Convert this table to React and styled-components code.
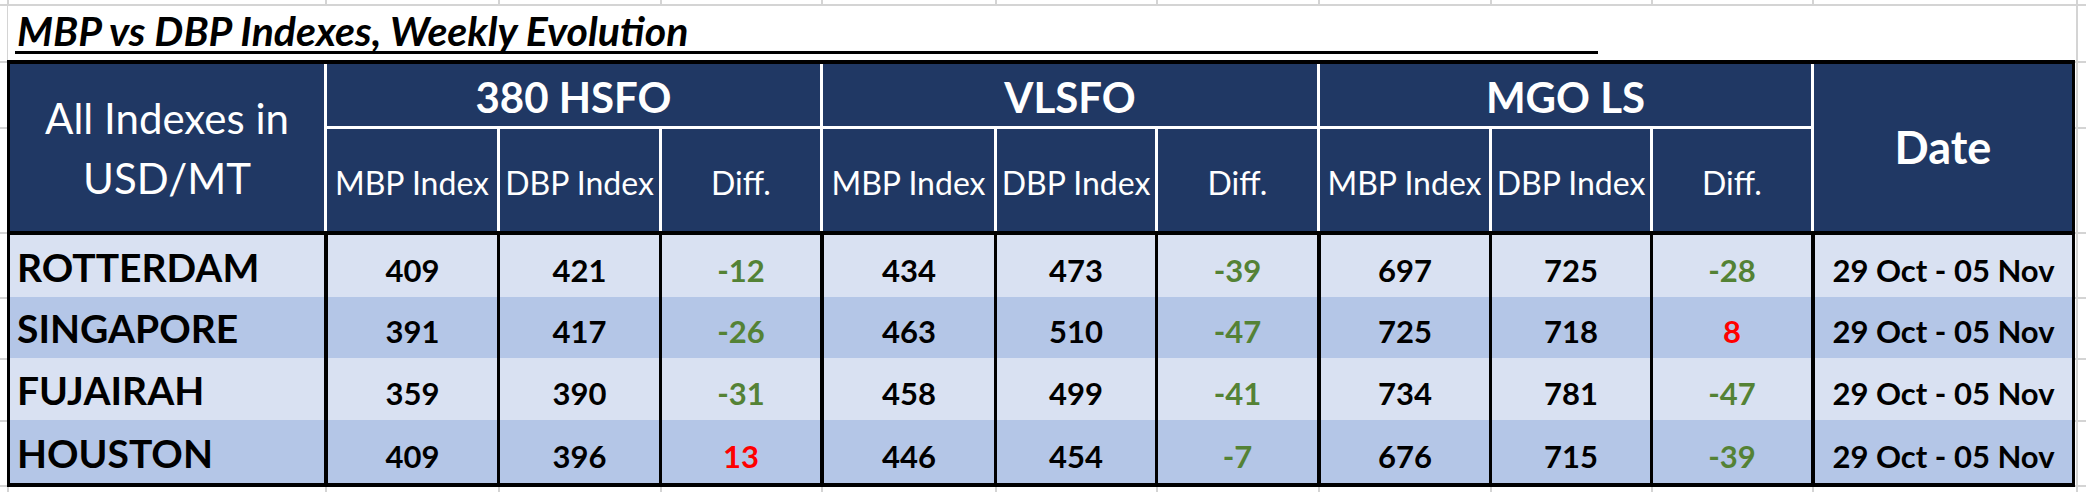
import React from 'react';
import styled, { createGlobalStyle } from 'styled-components';

const GlobalStyle = createGlobalStyle`
  html, body {
    margin: 0;
    padding: 0;
    background: #ffffff;
  }
  body {
    font-family: Lato, 'Liberation Sans', sans-serif;
  }
`;

// spreadsheet gridlines that show around the table
const GRID = '#d4d4d4';
const gridX = [7, 325, 498, 660, 821, 995, 1156, 1318, 1490, 1651, 1812, 2076];
const gridY = [4, 61, 127, 232, 297, 358, 420, 485];
const gridBackground = [
  ...gridX.map(x => `linear-gradient(90deg, transparent ${x}px, ${GRID} ${x}px, ${GRID} ${x + 2}px, transparent ${x + 2}px)`),
  ...gridY.map(y => `linear-gradient(180deg, transparent ${y}px, ${GRID} ${y}px, ${GRID} ${y + 2}px, transparent ${y + 2}px)`),
].join(', ');

const COLUMNS = '314px 173px 162px 161px 174px 161px 162px 172px 161px 161px 261px';

const NAVY = '#203864';
const LIGHT = '#d9e1f2';
const MID = '#b4c6e7';
const GREEN = '#548235';
const RED = '#ff0000';

const Sheet = styled.div`
  width: 2086px;
  height: 492px;
  box-sizing: border-box;
  padding: 6px 0 0 7px;
  display: flex;
  flex-direction: column;
  background-color: #ffffff;
  background-image: ${gridBackground};
  overflow: hidden;
`;

const TitleRow = styled.div`
  margin-left: 1px;
  width: 2068px;
  height: 54px;
  box-sizing: border-box;
  padding-left: 7px;
  background: #ffffff;
  display: flex;
`;

const TitleCell = styled.div`
  width: 1583px;
  height: 48px;
  box-sizing: border-box;
  border-bottom: 3px solid #000;
  display: flex;
  align-items: flex-end;
  padding-left: 2px;
`;

const Title = styled.h1`
  margin: 0;
  font-size: 41px;
  line-height: 1;
  font-weight: 700;
  font-style: italic;
  color: #000;
`;

const TableFrame = styled.div`
  width: 2068px;
  box-sizing: border-box;
  border: 3px solid #000;
  border-top-width: 4px;
  border-bottom-width: 4px;
  display: flex;
  flex-direction: column;
`;

const HeaderGrid = styled.div`
  display: grid;
  grid-template-columns: ${COLUMNS};
  grid-template-rows: 62px 105px;
  background: ${NAVY};
  color: #ffffff;
`;

const HeadCell = styled.div`
  box-sizing: border-box;
  display: flex;
  align-items: center;
  justify-content: center;
  text-align: center;
  line-height: 1;
  white-space: nowrap;
  border-left: ${p => (p.$first ? 'none' : '3px solid #ffffff')};
  border-top: ${p => (p.$sub ? '3px solid #ffffff' : 'none')};
`;

const CornerCell = styled(HeadCell)`
  grid-row: 1 / 3;
  font-size: 42px;
  line-height: 60px;
  font-weight: 400;
`;

const GroupCell = styled(HeadCell)`
  grid-column: span 3;
  font-size: 42px;
  font-weight: 700;
  padding-top: 4px;
`;

const DateHead = styled(HeadCell)`
  grid-column: 11;
  grid-row: 1 / 3;
  font-size: 45px;
  font-weight: 700;
`;

const SubCell = styled(HeadCell)`
  grid-row: 2;
  font-size: 32px;
  font-weight: 400;
  padding-top: 6px;
`;

const BodyGrid = styled.div`
  display: grid;
  grid-template-columns: ${COLUMNS};
  grid-template-rows: 62px 61px 62px 63px;
  border-top: 4px solid #000;
`;

const BodyCell = styled.div`
  box-sizing: border-box;
  display: flex;
  align-items: flex-end;
  justify-content: center;
  line-height: 1;
  white-space: nowrap;
  font-weight: 700;
  font-size: 31px;
  padding-bottom: 11px;
  color: ${p => p.$color || '#000'};
  background: ${p => (p.$shade ? MID : LIGHT)};
  border-left: ${p => (p.$sep ? `${p.$sep}px solid #000` : 'none')};
`;

const PortCell = styled(BodyCell)`
  justify-content: flex-start;
  padding-left: 7px;
  padding-bottom: 10px;
  font-size: 39px;
`;

const groups = ['380 HSFO', 'VLSFO', 'MGO LS'];
const subs = ['MBP Index', 'DBP Index', 'Diff.'];

const rows = [
  { port: 'ROTTERDAM', values: [409, 421, -12, 434, 473, -39, 697, 725, -28] },
  { port: 'SINGAPORE', values: [391, 417, -26, 463, 510, -47, 725, 718, 8] },
  { port: 'FUJAIRAH', values: [359, 390, -31, 458, 499, -41, 734, 781, -47] },
  { port: 'HOUSTON', values: [409, 396, 13, 446, 454, -7, 676, 715, -39] },
];

const PERIOD = '29 Oct - 05 Nov';

const diffColor = v => (v < 0 ? GREEN : RED);

const App = () => {
  return (
    <>
      <GlobalStyle />
      <Sheet>
        <TitleRow>
          <TitleCell>
            <Title>MBP vs DBP Indexes, Weekly Evolution</Title>
          </TitleCell>
        </TitleRow>
        <TableFrame>
          <HeaderGrid>
            <CornerCell $first>
              All Indexes in
              <br />
              USD/MT
            </CornerCell>
            {groups.map(g => (
              <GroupCell key={g}>{g}</GroupCell>
            ))}
            <DateHead>Date</DateHead>
            {groups.map(g =>
              subs.map(s => (
                <SubCell key={g + s} $sub>
                  {s}
                </SubCell>
              ))
            )}
          </HeaderGrid>
          <BodyGrid>
            {rows.map((row, r) => (
              <React.Fragment key={row.port}>
                <PortCell $shade={r % 2 === 1}>{row.port}</PortCell>
                {row.values.map((v, i) => (
                  <BodyCell
                    key={i}
                    $shade={r % 2 === 1}
                    $sep={i % 3 === 0 ? 4 : 3}
                    $color={i % 3 === 2 ? diffColor(v) : undefined}
                  >
                    {v}
                  </BodyCell>
                ))}
                <BodyCell $shade={r % 2 === 1} $sep={4}>
                  {PERIOD}
                </BodyCell>
              </React.Fragment>
            ))}
          </BodyGrid>
        </TableFrame>
      </Sheet>
    </>
  );
};

export default App;
